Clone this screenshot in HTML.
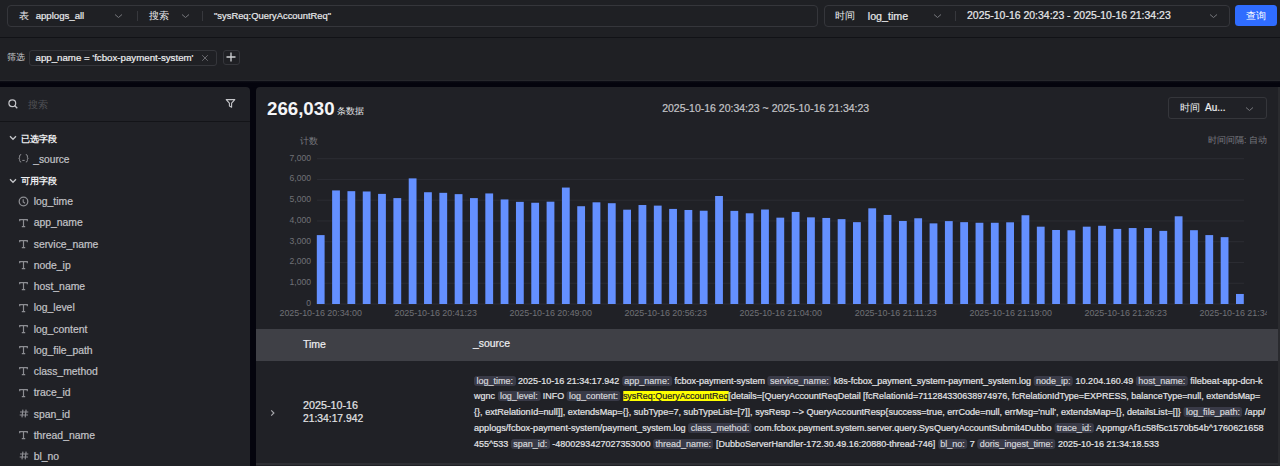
<!DOCTYPE html>
<html><head><meta charset="utf-8">
<style>
html,body{margin:0;padding:0;}
body{width:1280px;height:466px;overflow:hidden;background:#04040d;position:relative;font-family:"Liberation Sans",sans-serif;}
.abs{position:absolute;}
.t,.src,.fname{-webkit-text-stroke:0.2px currentColor;}
.t{position:absolute;white-space:nowrap;line-height:14px;}
#top{position:absolute;left:0;top:0;width:1280px;height:81px;background:#1f2024;}
#topline{position:absolute;left:0;top:37px;width:1280px;height:1px;background:#111216;}
.box{position:absolute;border:1px solid #35363b;border-radius:4px;box-sizing:border-box;}
.div{position:absolute;width:1px;background:#37383d;}
#side{position:absolute;left:0;top:87px;width:250px;height:379px;background:#202126;border-radius:0 4px 0 0;}
#main{position:absolute;left:256px;top:87px;width:1022px;height:379px;background:#202126;border-radius:4px 0 0 0;}
#strip{position:absolute;left:1278px;top:87px;width:2px;height:379px;background:#2a2b2f;}
.ficon{position:absolute;left:19px;width:9px;text-align:center;color:#8d8e93;line-height:14px;}
.fname{position:absolute;left:33.7px;color:#c3c4c8;font-size:10.4px;line-height:14px;white-space:nowrap;}
.yl{font-family:"Liberation Sans",sans-serif;font-size:8.6px;fill:#707176;}
.xl{font-family:"Liberation Sans",sans-serif;font-size:8.9px;fill:#707176;}
.src{position:absolute;left:473.5px;white-space:nowrap;font-size:9px;line-height:16px;color:#e3e4e6;transform-origin:0 50%;}
.tag{background:#393a47;border-radius:3px;padding:0 2.5px;color:#d5d6da;}
.hl{background:#ffff00;color:#222;}
</style></head><body>
<div id="top"></div>
<div id="topline"></div>
<div class="abs" style="left:0;top:80px;width:1280px;height:1px;background:#26272c"></div>
<div class="abs" style="left:0;top:81px;width:1280px;height:2px;background:linear-gradient(#0e0f16,#04040d)"></div>
<!-- search group -->
<div class="box" style="left:7px;top:5px;width:811px;height:22px;"></div>
<div class="t" style="left:18.5px;top:8.5px;font-size:10px;color:#e8e9eb;-webkit-text-stroke:0">表</div>
<div class="t" style="left:35.7px;top:9px;font-size:9.6px;color:#e8e9eb">applogs_all</div>
<svg class="abs" style="left:114px;top:13.2px" width="9" height="6" viewBox="0 0 9 6"><path d="M1 1.5 L4.5 4.5 L8 1.5" fill="none" stroke="#76777c" stroke-width="1"/></svg>
<div class="div" style="left:137px;top:10.5px;height:10px"></div>
<div class="t" style="left:149px;top:8.5px;font-size:10px;color:#e8e9eb;-webkit-text-stroke:0">搜索</div>
<svg class="abs" style="left:180.5px;top:13.2px" width="9" height="6" viewBox="0 0 9 6"><path d="M1 1.5 L4.5 4.5 L8 1.5" fill="none" stroke="#76777c" stroke-width="1"/></svg>
<div class="div" style="left:202px;top:10.5px;height:10px"></div>
<div class="t" style="left:214px;top:9px;font-size:9.4px;color:#e8e9eb">"sysReq:QueryAccountReq"</div>
<!-- time group -->
<div class="box" style="left:823.5px;top:5px;width:406px;height:22px;"></div>
<div class="t" style="left:835px;top:8.5px;font-size:10px;color:#e8e9eb;-webkit-text-stroke:0">时间</div>
<div class="t" style="left:867.8px;top:8.7px;font-size:10.7px;color:#e8e9eb">log_time</div>
<svg class="abs" style="left:932.5px;top:13.2px" width="9" height="6" viewBox="0 0 9 6"><path d="M1 1.5 L4.5 4.5 L8 1.5" fill="none" stroke="#76777c" stroke-width="1"/></svg>
<div class="div" style="left:955px;top:10.5px;height:10px"></div>
<div class="t" style="left:967px;top:8.7px;font-size:10.47px;color:#e8e9eb">2025-10-16 20:34:23 - 2025-10-16 21:34:23</div>
<svg class="abs" style="left:1209px;top:13px" width="9" height="6" viewBox="0 0 9 6"><path d="M1 1.5 L4.5 4.5 L8 1.5" fill="none" stroke="#76777c" stroke-width="1"/></svg>
<div class="abs" style="left:1235px;top:5px;width:42px;height:21px;background:#2f6cff;border-radius:3.5px"></div>
<div class="t" style="left:1235px;top:8.8px;width:42px;text-align:center;font-size:9.6px;color:#fff;-webkit-text-stroke:0">查询</div>
<!-- filter row -->
<div class="t" style="left:7px;top:50px;font-size:8.5px;color:#c8c9cd;-webkit-text-stroke:0">筛选</div>
<div class="box" style="left:29px;top:49.5px;width:188px;height:16px;border-radius:3px"></div>
<div class="t" style="left:35.5px;top:50.5px;font-size:9.7px;color:#eeeff1">app_name = 'fcbox-payment-system'</div>
<svg class="abs" style="left:201px;top:54px" width="8" height="8" viewBox="0 0 8 8"><path d="M1.2 1.2 L6.8 6.8 M6.8 1.2 L1.2 6.8" stroke="#707176" stroke-width="0.9"/></svg>
<div class="box" style="left:222.5px;top:49.5px;width:17px;height:15.5px;border-radius:3px"></div>
<svg class="abs" style="left:226px;top:52px" width="10" height="10" viewBox="0 0 10 10"><path d="M5 0.5 V9.5 M0.5 5 H9.5" stroke="#d0d1d4" stroke-width="1.3"/></svg>
<!-- sidebar -->
<div id="side"></div>
<svg class="abs" style="left:8px;top:99.3px" width="11" height="10" viewBox="0 0 11 10"><circle cx="4.3" cy="4.3" r="3.4" fill="none" stroke="#c5c6ca" stroke-width="1.2"/><path d="M6.8 6.8 L9.3 9.3" stroke="#c5c6ca" stroke-width="1.3"/></svg>
<div class="t" style="left:27.8px;top:97.5px;font-size:10px;color:#4f5055;-webkit-text-stroke:0">搜索</div>
<svg class="abs" style="left:225px;top:98px" width="11" height="10" viewBox="0 0 11 10"><path d="M1.2 1.6 H9.8 L6.6 5.2 V9.2 L4.4 8 V5.2 Z" fill="none" stroke="#c5c6ca" stroke-width="1.1" stroke-linejoin="round"/></svg>
<div class="abs" style="left:0;top:121px;width:250px;height:1px;background:#131418"></div>
<svg class="abs" style="left:9px;top:135px" width="8" height="6" viewBox="0 0 8 6"><path d="M1 1.3 L4 4.3 L7 1.3" fill="none" stroke="#c5c6ca" stroke-width="1.3"/></svg>
<div class="t" style="left:21px;top:131.5px;font-size:9.3px;color:#eeeff1;font-weight:bold;-webkit-text-stroke:0">已选字段</div>
<svg class="abs" style="left:17.5px;top:154.2px" width="11" height="9" viewBox="0 0 11 9"><path d="M3.2 0.6 Q1.6 0.6 1.6 2 V3.4 Q1.6 4.3 0.7 4.3 Q1.6 4.3 1.6 5.2 V6.6 Q1.6 8 3.2 8 M7.8 0.6 Q9.4 0.6 9.4 2 V3.4 Q9.4 4.3 10.3 4.3 Q9.4 4.3 9.4 5.2 V6.6 Q9.4 8 7.8 8 M4.3 6.4 H6.7" fill="none" stroke="#8d8e93" stroke-width="1"/></svg>
<div class="t" style="left:33.3px;top:152.8px;font-size:10.2px;color:#c3c4c8">_source</div>
<svg class="abs" style="left:9px;top:177.5px" width="8" height="6" viewBox="0 0 8 6"><path d="M1 1.3 L4 4.3 L7 1.3" fill="none" stroke="#c5c6ca" stroke-width="1.3"/></svg>
<div class="t" style="left:21px;top:174px;font-size:9.3px;color:#eeeff1;font-weight:bold;-webkit-text-stroke:0">可用字段</div>
<svg class="abs" style="left:18px;top:195.8px" width="11" height="11" viewBox="0 0 11 11"><circle cx="5.5" cy="5.5" r="4.3" fill="none" stroke="#8d8e93" stroke-width="1.25"/><path d="M5.2 3.2 V5.9 L7 7.2" fill="none" stroke="#8d8e93" stroke-width="1.1"/></svg><div class="fname" style="top:195.1px">log_time</div>
<svg class="abs" style="left:18.7px;top:218.5px" width="9" height="9" viewBox="0 0 9 9"><path d="M0.7 2.3 V0.7 H8.3 V2.3 M4.5 0.7 V7.6 M2.8 7.6 H6.2" fill="none" stroke="#8d8e93" stroke-width="1.2"/></svg><div class="fname" style="top:216.3px">app_name</div>
<svg class="abs" style="left:18.7px;top:239.8px" width="9" height="9" viewBox="0 0 9 9"><path d="M0.7 2.3 V0.7 H8.3 V2.3 M4.5 0.7 V7.6 M2.8 7.6 H6.2" fill="none" stroke="#8d8e93" stroke-width="1.2"/></svg><div class="fname" style="top:237.6px">service_name</div>
<svg class="abs" style="left:18.7px;top:261.0px" width="9" height="9" viewBox="0 0 9 9"><path d="M0.7 2.3 V0.7 H8.3 V2.3 M4.5 0.7 V7.6 M2.8 7.6 H6.2" fill="none" stroke="#8d8e93" stroke-width="1.2"/></svg><div class="fname" style="top:258.8px">node_ip</div>
<svg class="abs" style="left:18.7px;top:282.3px" width="9" height="9" viewBox="0 0 9 9"><path d="M0.7 2.3 V0.7 H8.3 V2.3 M4.5 0.7 V7.6 M2.8 7.6 H6.2" fill="none" stroke="#8d8e93" stroke-width="1.2"/></svg><div class="fname" style="top:280.1px">host_name</div>
<svg class="abs" style="left:18.7px;top:303.5px" width="9" height="9" viewBox="0 0 9 9"><path d="M0.7 2.3 V0.7 H8.3 V2.3 M4.5 0.7 V7.6 M2.8 7.6 H6.2" fill="none" stroke="#8d8e93" stroke-width="1.2"/></svg><div class="fname" style="top:301.3px">log_level</div>
<svg class="abs" style="left:18.7px;top:324.7px" width="9" height="9" viewBox="0 0 9 9"><path d="M0.7 2.3 V0.7 H8.3 V2.3 M4.5 0.7 V7.6 M2.8 7.6 H6.2" fill="none" stroke="#8d8e93" stroke-width="1.2"/></svg><div class="fname" style="top:322.5px">log_content</div>
<svg class="abs" style="left:18.7px;top:346.0px" width="9" height="9" viewBox="0 0 9 9"><path d="M0.7 2.3 V0.7 H8.3 V2.3 M4.5 0.7 V7.6 M2.8 7.6 H6.2" fill="none" stroke="#8d8e93" stroke-width="1.2"/></svg><div class="fname" style="top:343.8px">log_file_path</div>
<svg class="abs" style="left:18.7px;top:367.2px" width="9" height="9" viewBox="0 0 9 9"><path d="M0.7 2.3 V0.7 H8.3 V2.3 M4.5 0.7 V7.6 M2.8 7.6 H6.2" fill="none" stroke="#8d8e93" stroke-width="1.2"/></svg><div class="fname" style="top:365.0px">class_method</div>
<svg class="abs" style="left:18.7px;top:388.5px" width="9" height="9" viewBox="0 0 9 9"><path d="M0.7 2.3 V0.7 H8.3 V2.3 M4.5 0.7 V7.6 M2.8 7.6 H6.2" fill="none" stroke="#8d8e93" stroke-width="1.2"/></svg><div class="fname" style="top:386.3px">trace_id</div>
<svg class="abs" style="left:18.5px;top:408.9px" width="10" height="9" viewBox="0 0 10 9"><path d="M3.9 0.6 L3 8.4 M7.1 0.6 L6.2 8.4 M1 3 H9.3 M0.7 6 H9" fill="none" stroke="#8d8e93" stroke-width="1.15"/></svg><div class="fname" style="top:407.5px">span_id</div>
<svg class="abs" style="left:18.7px;top:430.9px" width="9" height="9" viewBox="0 0 9 9"><path d="M0.7 2.3 V0.7 H8.3 V2.3 M4.5 0.7 V7.6 M2.8 7.6 H6.2" fill="none" stroke="#8d8e93" stroke-width="1.2"/></svg><div class="fname" style="top:428.7px">thread_name</div>
<svg class="abs" style="left:18.5px;top:451.4px" width="10" height="9" viewBox="0 0 10 9"><path d="M3.9 0.6 L3 8.4 M7.1 0.6 L6.2 8.4 M1 3 H9.3 M0.7 6 H9" fill="none" stroke="#8d8e93" stroke-width="1.15"/></svg><div class="fname" style="top:450.0px">bl_no</div>
<!-- main -->
<div id="main"></div><div id="strip"></div>
<div class="t" style="left:267px;top:98.6px;font-size:18.7px;line-height:20px;color:#f4f5f7;font-weight:bold;-webkit-text-stroke:0">266,030</div>
<div class="t" style="left:337px;top:104px;font-size:8.6px;color:#e8e9eb;-webkit-text-stroke:0">条数据</div>
<div class="t" style="left:662.2px;top:100.5px;font-size:10.5px;color:#c3c4c8">2025-10-16 20:34:23 ~ 2025-10-16 21:34:23</div>
<div class="box" style="left:1168px;top:97px;width:99px;height:22px;border-radius:3px"></div>
<div class="t" style="left:1180px;top:101px;font-size:10px;color:#eeeff1;-webkit-text-stroke:0">时间</div>
<div class="t" style="left:1205px;top:101px;font-size:10px;color:#eeeff1">Au...</div>
<svg class="abs" style="left:1244.5px;top:105.5px" width="9" height="6" viewBox="0 0 9 6"><path d="M1 1.5 L4.5 4.5 L8 1.5" fill="none" stroke="#76777c" stroke-width="1"/></svg>
<div class="t" style="left:1208px;top:133px;font-size:8.55px;color:#7a7b80;-webkit-text-stroke:0">时间间隔: 自动</div>
<div class="t" style="left:300px;top:133.5px;font-size:8.5px;color:#7a7b80;-webkit-text-stroke:0">计数</div>
<svg class="abs" style="left:0;top:0" width="1280" height="330" viewBox="0 0 1280 330">
<defs><clipPath id="cp"><rect x="0" y="0" width="1267" height="330"/></clipPath></defs><g clip-path="url(#cp)">
<rect x="317" y="303.50" width="927" height="1" fill="#2c2d33"/>
<text x="311" y="305.90" text-anchor="end" class="yl">0</text>
<rect x="317" y="282.74" width="927" height="1" fill="#2c2d33"/>
<text x="311" y="285.14" text-anchor="end" class="yl">1,000</text>
<rect x="317" y="261.98" width="927" height="1" fill="#2c2d33"/>
<text x="311" y="264.38" text-anchor="end" class="yl">2,000</text>
<rect x="317" y="241.22" width="927" height="1" fill="#2c2d33"/>
<text x="311" y="243.62" text-anchor="end" class="yl">3,000</text>
<rect x="317" y="220.46" width="927" height="1" fill="#2c2d33"/>
<text x="311" y="222.86" text-anchor="end" class="yl">4,000</text>
<rect x="317" y="199.70" width="927" height="1" fill="#2c2d33"/>
<text x="311" y="202.10" text-anchor="end" class="yl">5,000</text>
<rect x="317" y="178.94" width="927" height="1" fill="#2c2d33"/>
<text x="311" y="181.34" text-anchor="end" class="yl">6,000</text>
<rect x="317" y="158.18" width="927" height="1" fill="#2c2d33"/>
<text x="311" y="160.58" text-anchor="end" class="yl">7,000</text>
<rect x="316.80" y="235.10" width="7.8" height="68.90" fill="#6490ff"/>
<rect x="332.12" y="190.42" width="7.8" height="113.58" fill="#6490ff"/>
<rect x="347.44" y="191.17" width="7.8" height="112.83" fill="#6490ff"/>
<rect x="362.76" y="191.48" width="7.8" height="112.52" fill="#6490ff"/>
<rect x="378.08" y="193.89" width="7.8" height="110.11" fill="#6490ff"/>
<rect x="393.40" y="198.10" width="7.8" height="105.90" fill="#6490ff"/>
<rect x="408.72" y="178.38" width="7.8" height="125.62" fill="#6490ff"/>
<rect x="424.04" y="192.23" width="7.8" height="111.77" fill="#6490ff"/>
<rect x="439.36" y="192.83" width="7.8" height="111.17" fill="#6490ff"/>
<rect x="454.68" y="194.14" width="7.8" height="109.86" fill="#6490ff"/>
<rect x="470.00" y="198.10" width="7.8" height="105.90" fill="#6490ff"/>
<rect x="485.32" y="193.43" width="7.8" height="110.57" fill="#6490ff"/>
<rect x="500.64" y="199.45" width="7.8" height="104.55" fill="#6490ff"/>
<rect x="515.96" y="201.86" width="7.8" height="102.14" fill="#6490ff"/>
<rect x="531.28" y="202.75" width="7.8" height="101.25" fill="#6490ff"/>
<rect x="546.60" y="201.69" width="7.8" height="102.31" fill="#6490ff"/>
<rect x="561.92" y="187.56" width="7.8" height="116.44" fill="#6490ff"/>
<rect x="577.24" y="206.22" width="7.8" height="97.78" fill="#6490ff"/>
<rect x="592.56" y="202.30" width="7.8" height="101.70" fill="#6490ff"/>
<rect x="607.88" y="203.21" width="7.8" height="100.79" fill="#6490ff"/>
<rect x="623.20" y="209.69" width="7.8" height="94.31" fill="#6490ff"/>
<rect x="638.52" y="205.02" width="7.8" height="98.98" fill="#6490ff"/>
<rect x="653.84" y="205.62" width="7.8" height="98.38" fill="#6490ff"/>
<rect x="669.16" y="208.92" width="7.8" height="95.08" fill="#6490ff"/>
<rect x="684.48" y="209.98" width="7.8" height="94.02" fill="#6490ff"/>
<rect x="699.80" y="210.73" width="7.8" height="93.27" fill="#6490ff"/>
<rect x="715.12" y="195.99" width="7.8" height="108.01" fill="#6490ff"/>
<rect x="730.44" y="210.87" width="7.8" height="93.13" fill="#6490ff"/>
<rect x="745.76" y="213.28" width="7.8" height="90.72" fill="#6490ff"/>
<rect x="761.08" y="209.52" width="7.8" height="94.48" fill="#6490ff"/>
<rect x="776.40" y="217.66" width="7.8" height="86.34" fill="#6490ff"/>
<rect x="791.72" y="211.93" width="7.8" height="92.07" fill="#6490ff"/>
<rect x="807.04" y="217.35" width="7.8" height="86.65" fill="#6490ff"/>
<rect x="822.36" y="217.95" width="7.8" height="86.05" fill="#6490ff"/>
<rect x="837.68" y="219.15" width="7.8" height="84.85" fill="#6490ff"/>
<rect x="853.00" y="222.16" width="7.8" height="81.84" fill="#6490ff"/>
<rect x="868.32" y="208.32" width="7.8" height="95.68" fill="#6490ff"/>
<rect x="883.64" y="214.94" width="7.8" height="89.06" fill="#6490ff"/>
<rect x="898.96" y="220.96" width="7.8" height="83.04" fill="#6490ff"/>
<rect x="914.28" y="218.26" width="7.8" height="85.74" fill="#6490ff"/>
<rect x="929.60" y="223.37" width="7.8" height="80.63" fill="#6490ff"/>
<rect x="944.92" y="221.11" width="7.8" height="82.89" fill="#6490ff"/>
<rect x="960.24" y="222.16" width="7.8" height="81.84" fill="#6490ff"/>
<rect x="975.56" y="222.77" width="7.8" height="81.23" fill="#6490ff"/>
<rect x="990.88" y="222.77" width="7.8" height="81.23" fill="#6490ff"/>
<rect x="1006.20" y="222.31" width="7.8" height="81.69" fill="#6490ff"/>
<rect x="1021.52" y="215.25" width="7.8" height="88.75" fill="#6490ff"/>
<rect x="1036.84" y="226.67" width="7.8" height="77.33" fill="#6490ff"/>
<rect x="1052.16" y="229.99" width="7.8" height="74.01" fill="#6490ff"/>
<rect x="1067.48" y="230.28" width="7.8" height="73.72" fill="#6490ff"/>
<rect x="1082.80" y="226.67" width="7.8" height="77.33" fill="#6490ff"/>
<rect x="1098.12" y="225.78" width="7.8" height="78.22" fill="#6490ff"/>
<rect x="1113.44" y="228.93" width="7.8" height="75.07" fill="#6490ff"/>
<rect x="1128.76" y="228.04" width="7.8" height="75.96" fill="#6490ff"/>
<rect x="1144.08" y="228.04" width="7.8" height="75.96" fill="#6490ff"/>
<rect x="1159.40" y="230.88" width="7.8" height="73.12" fill="#6490ff"/>
<rect x="1174.72" y="216.29" width="7.8" height="87.71" fill="#6490ff"/>
<rect x="1190.04" y="230.20" width="7.8" height="73.80" fill="#6490ff"/>
<rect x="1205.36" y="235.08" width="7.8" height="68.92" fill="#6490ff"/>
<rect x="1220.68" y="237.15" width="7.8" height="66.85" fill="#6490ff"/>
<rect x="1236.00" y="293.97" width="7.8" height="10.03" fill="#6490ff"/>
<text x="320.7" y="315.6" text-anchor="middle" class="xl">2025-10-16 20:34:00</text>
<text x="435.7" y="315.6" text-anchor="middle" class="xl">2025-10-16 20:41:23</text>
<text x="550.7" y="315.6" text-anchor="middle" class="xl">2025-10-16 20:49:00</text>
<text x="665.7" y="315.6" text-anchor="middle" class="xl">2025-10-16 20:56:23</text>
<text x="780.7" y="315.6" text-anchor="middle" class="xl">2025-10-16 21:04:00</text>
<text x="895.7" y="315.6" text-anchor="middle" class="xl">2025-10-16 21:11:23</text>
<text x="1010.7" y="315.6" text-anchor="middle" class="xl">2025-10-16 21:19:00</text>
<text x="1125.7" y="315.6" text-anchor="middle" class="xl">2025-10-16 21:26:23</text>
<text x="1240.7" y="315.6" text-anchor="middle" class="xl">2025-10-16 21:34:00</text></g>
</svg>
<!-- table -->
<div class="abs" style="left:256px;top:329px;width:1022px;height:32px;background:#3f4046"></div>
<div class="t" style="left:303px;top:336.8px;font-size:10.5px;color:#eeeff1">Time</div>
<div class="t" style="left:473px;top:336.8px;font-size:10.4px;color:#eeeff1">_source</div>
<svg class="abs" style="left:269px;top:409px" width="7" height="8" viewBox="0 0 7 8"><path d="M2.2 1.3 L4.9 4 L2.2 6.7" fill="none" stroke="#a9aaae" stroke-width="1.15"/></svg>
<div class="t" style="left:303px;top:398px;font-size:10.75px;color:#e3e4e6">2025-10-16</div>
<div class="t" style="left:303px;top:411.5px;font-size:10.3px;color:#e3e4e6">21:34:17.942</div>
<div class="src" id="src0" style="top:372.5px;transform:scaleX(1.0012)"><span class="tag">log_time:</span> 2025-10-16 21:34:17.942 <span class="tag">app_name:</span> fcbox-payment-system <span class="tag">service_name:</span> k8s-fcbox_payment_system-payment_system.log <span class="tag">node_ip:</span> 10.204.160.49 <span class="tag">host_name:</span> filebeat-app-dcn-k</div>
<div class="src" id="src1" style="top:388.4px;transform:scaleX(0.9952)">wgnc <span class="tag">log_level:</span> INFO <span class="tag">log_content:</span> <span class="hl">sysReq:QueryAccountReq</span>[details=[QueryAccountReqDetail [fcRelationId=711284330638974976, fcRelationIdType=EXPRESS, balanceType=null, extendsMap=</div>
<div class="src" id="src2" style="top:404.3px;transform:scaleX(1.0107)">{}, extRelationId=null]], extendsMap={}, subType=7, subTypeList=[7]], sysResp --&gt; QueryAccountResp{success=true, errCode=null, errMsg='null', extendsMap={}, detailsList=[]} <span class="tag">log_file_path:</span> /app/</div>
<div class="src" id="src3" style="top:420.2px;transform:scaleX(1.0096)">applogs/fcbox-payment-system/payment_system.log <span class="tag">class_method:</span> com.fcbox.payment.system.server.query.SysQueryAccountSubmit4Dubbo <span class="tag">trace_id:</span> AppmgrAf1c58f5c1570b54b^1760621658</div>
<div class="src" id="src4" style="top:436.1px;transform:scaleX(1.0004)">455^533 <span class="tag">span_id:</span> -4800293427027353000 <span class="tag">thread_name:</span> [DubboServerHandler-172.30.49.16:20880-thread-746] <span class="tag">bl_no:</span> 7 <span class="tag">doris_ingest_time:</span> 2025-10-16 21:34:18.533</div>
<div class="abs" style="left:256px;top:463px;width:1022px;height:2px;background:#2e2f34"></div>
</body></html>
